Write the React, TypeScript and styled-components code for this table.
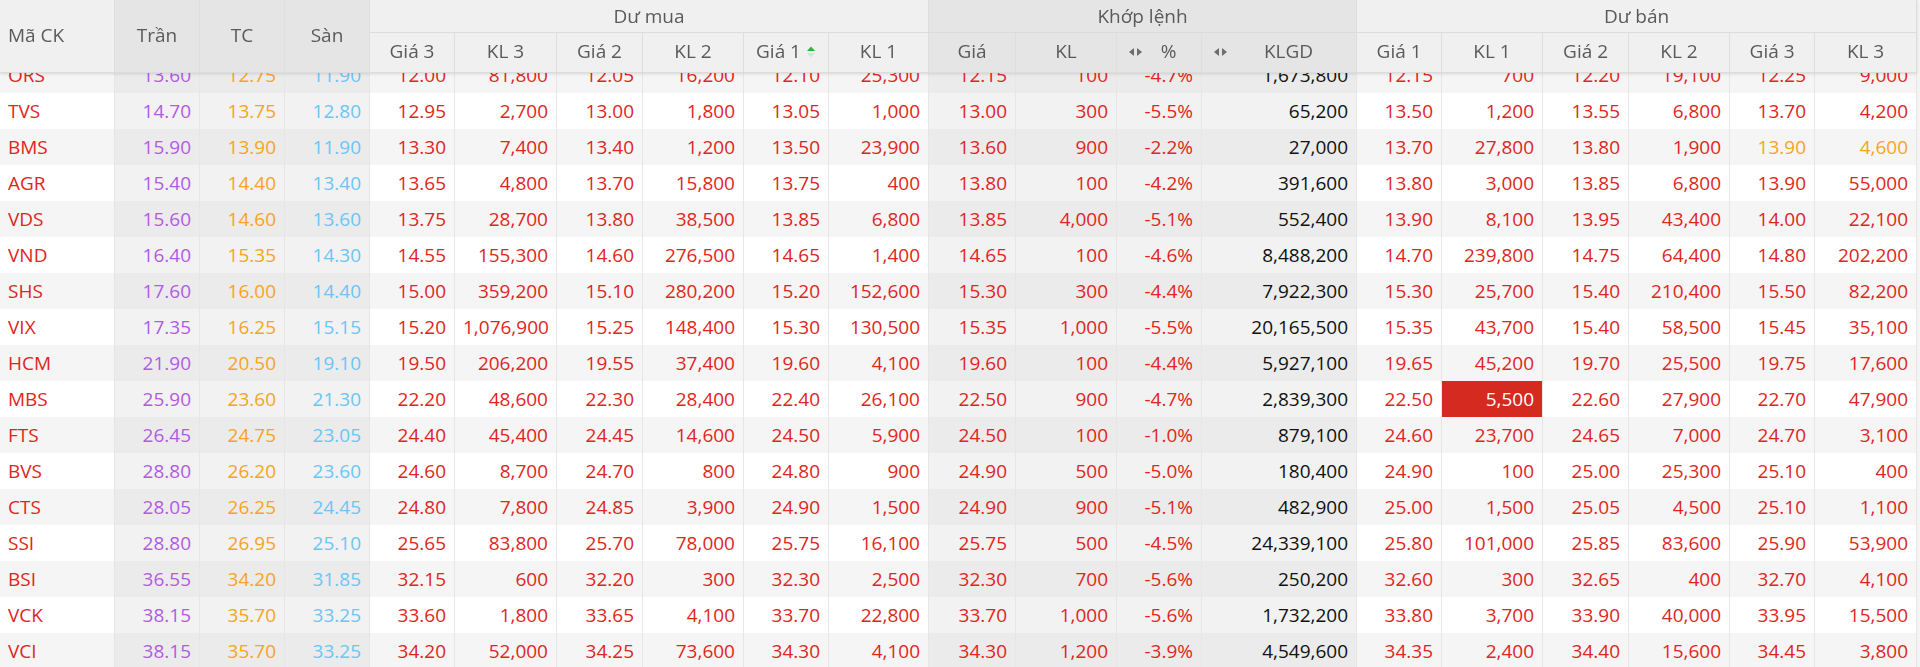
import React, { useLayoutEffect, useRef } from 'react';
import styled, { createGlobalStyle, css } from 'styled-components';

const GlobalStyle = createGlobalStyle`
  html, body { margin: 0; padding: 0; background: #ffffff; }
  body { font-family: "Open Sans", "Liberation Sans", sans-serif; }
  * { box-sizing: border-box; }
`;

const C = {
  red: '#e0251d',
  purple: '#b25ae4',
  orange: '#f7a41c',
  cyan: '#6ac6f6',
  green: '#1ea62c',
  black: '#111111',
  head: '#5a5a5a',
};

type Tone = 'plain' | 'dark';

interface ColDef {
  width: number;
  tone: Tone;
}

const COLS: ColDef[] = [
  { width: 115, tone: 'plain' },
  { width: 85, tone: 'dark' },
  { width: 85, tone: 'dark' },
  { width: 85, tone: 'dark' },
  { width: 85, tone: 'plain' },
  { width: 102, tone: 'plain' },
  { width: 86, tone: 'plain' },
  { width: 101, tone: 'plain' },
  { width: 85, tone: 'plain' },
  { width: 100, tone: 'plain' },
  { width: 87, tone: 'dark' },
  { width: 101, tone: 'dark' },
  { width: 85, tone: 'dark' },
  { width: 155, tone: 'dark' },
  { width: 85, tone: 'plain' },
  { width: 101, tone: 'plain' },
  { width: 86, tone: 'plain' },
  { width: 101, tone: 'plain' },
  { width: 85, tone: 'plain' },
  { width: 102, tone: 'plain' },
];

type Row = {
  sym: string;
  ceil: string;
  ref: string;
  floor: string;
  bid: [string, string, string, string, string, string];
  match: [string, string, string, string];
  ask: [string, string, string, string, string, string];
  flash?: number;
};

const ROWS: Row[] = [
  { sym: 'ORS', ceil: '13.60', ref: '12.75', floor: '11.90', bid: ['12.00', '81,800', '12.05', '16,200', '12.10', '25,300'], match: ['12.15', '100', '-4.7%', '1,673,800'], ask: ['12.15', '700', '12.20', '19,100', '12.25', '9,000'] },
  { sym: 'TVS', ceil: '14.70', ref: '13.75', floor: '12.80', bid: ['12.95', '2,700', '13.00', '1,800', '13.05', '1,000'], match: ['13.00', '300', '-5.5%', '65,200'], ask: ['13.50', '1,200', '13.55', '6,800', '13.70', '4,200'] },
  { sym: 'BMS', ceil: '15.90', ref: '13.90', floor: '11.90', bid: ['13.30', '7,400', '13.40', '1,200', '13.50', '23,900'], match: ['13.60', '900', '-2.2%', '27,000'], ask: ['13.70', '27,800', '13.80', '1,900', '13.90', '4,600'] },
  { sym: 'AGR', ceil: '15.40', ref: '14.40', floor: '13.40', bid: ['13.65', '4,800', '13.70', '15,800', '13.75', '400'], match: ['13.80', '100', '-4.2%', '391,600'], ask: ['13.80', '3,000', '13.85', '6,800', '13.90', '55,000'] },
  { sym: 'VDS', ceil: '15.60', ref: '14.60', floor: '13.60', bid: ['13.75', '28,700', '13.80', '38,500', '13.85', '6,800'], match: ['13.85', '4,000', '-5.1%', '552,400'], ask: ['13.90', '8,100', '13.95', '43,400', '14.00', '22,100'] },
  { sym: 'VND', ceil: '16.40', ref: '15.35', floor: '14.30', bid: ['14.55', '155,300', '14.60', '276,500', '14.65', '1,400'], match: ['14.65', '100', '-4.6%', '8,488,200'], ask: ['14.70', '239,800', '14.75', '64,400', '14.80', '202,200'] },
  { sym: 'SHS', ceil: '17.60', ref: '16.00', floor: '14.40', bid: ['15.00', '359,200', '15.10', '280,200', '15.20', '152,600'], match: ['15.30', '300', '-4.4%', '7,922,300'], ask: ['15.30', '25,700', '15.40', '210,400', '15.50', '82,200'] },
  { sym: 'VIX', ceil: '17.35', ref: '16.25', floor: '15.15', bid: ['15.20', '1,076,900', '15.25', '148,400', '15.30', '130,500'], match: ['15.35', '1,000', '-5.5%', '20,165,500'], ask: ['15.35', '43,700', '15.40', '58,500', '15.45', '35,100'] },
  { sym: 'HCM', ceil: '21.90', ref: '20.50', floor: '19.10', bid: ['19.50', '206,200', '19.55', '37,400', '19.60', '4,100'], match: ['19.60', '100', '-4.4%', '5,927,100'], ask: ['19.65', '45,200', '19.70', '25,500', '19.75', '17,600'] },
  { sym: 'MBS', ceil: '25.90', ref: '23.60', floor: '21.30', bid: ['22.20', '48,600', '22.30', '28,400', '22.40', '26,100'], match: ['22.50', '900', '-4.7%', '2,839,300'], ask: ['22.50', '5,500', '22.60', '27,900', '22.70', '47,900'], flash: 1 },
  { sym: 'FTS', ceil: '26.45', ref: '24.75', floor: '23.05', bid: ['24.40', '45,400', '24.45', '14,600', '24.50', '5,900'], match: ['24.50', '100', '-1.0%', '879,100'], ask: ['24.60', '23,700', '24.65', '7,000', '24.70', '3,100'] },
  { sym: 'BVS', ceil: '28.80', ref: '26.20', floor: '23.60', bid: ['24.60', '8,700', '24.70', '800', '24.80', '900'], match: ['24.90', '500', '-5.0%', '180,400'], ask: ['24.90', '100', '25.00', '25,300', '25.10', '400'] },
  { sym: 'CTS', ceil: '28.05', ref: '26.25', floor: '24.45', bid: ['24.80', '7,800', '24.85', '3,900', '24.90', '1,500'], match: ['24.90', '900', '-5.1%', '482,900'], ask: ['25.00', '1,500', '25.05', '4,500', '25.10', '1,100'] },
  { sym: 'SSI', ceil: '28.80', ref: '26.95', floor: '25.10', bid: ['25.65', '83,800', '25.70', '78,000', '25.75', '16,100'], match: ['25.75', '500', '-4.5%', '24,339,100'], ask: ['25.80', '101,000', '25.85', '83,600', '25.90', '53,900'] },
  { sym: 'BSI', ceil: '36.55', ref: '34.20', floor: '31.85', bid: ['32.15', '600', '32.20', '300', '32.30', '2,500'], match: ['32.30', '700', '-5.6%', '250,200'], ask: ['32.60', '300', '32.65', '400', '32.70', '4,100'] },
  { sym: 'VCK', ceil: '38.15', ref: '35.70', floor: '33.25', bid: ['33.60', '1,800', '33.65', '4,100', '33.70', '22,800'], match: ['33.70', '1,000', '-5.6%', '1,732,200'], ask: ['33.80', '3,700', '33.90', '40,000', '33.95', '15,500'] },
  { sym: 'VCI', ceil: '38.15', ref: '35.70', floor: '33.25', bid: ['34.20', '52,000', '34.25', '73,600', '34.30', '4,100'], match: ['34.30', '1,200', '-3.9%', '4,549,600'], ask: ['34.35', '2,400', '34.40', '15,600', '34.45', '3,800'] },
];

function priceColor(p: string, r: Row): string {
  const v = parseFloat(p);
  if (v === parseFloat(r.ceil)) return C.purple;
  if (v === parseFloat(r.floor)) return C.cyan;
  const ref = parseFloat(r.ref);
  if (v === ref) return C.orange;
  return v > ref ? C.green : C.red;
}

/* ---------- layout ---------- */

const Viewport = styled.div`
  width: 1920px;
  height: 667px;
  overflow: hidden;
  background: #f4f4f4;
`;

const Board = styled.table`
  width: 1917px;
  table-layout: fixed;
  border-collapse: separate;
  border-spacing: 0;
  font-size: 19px;
  line-height: 1;
`;

const Head = styled.thead`
  position: sticky;
  top: 0;
  z-index: 2;
  box-shadow: 0 1px 3px rgba(0, 0, 0, 0.12);
`;

const HeadRow = styled.tr<{ $h: number }>`
  height: ${(p) => p.$h}px;
`;

const HeadCell = styled.th<{ $tone?: Tone; $left?: boolean; $group?: boolean }>`
  padding: 0 8px 2px;
  font-weight: 400;
  color: ${C.head};
  white-space: nowrap;
  vertical-align: middle;
  text-align: ${(p) => (p.$left ? 'left' : 'center')};
  background: ${(p) => (p.$tone === 'dark' ? '#e5e5e5' : '#f0f0f0')};
  border-right: 1px solid #dedede;
  border-bottom: 1px solid #dcdcdc;
  ${(p) =>
    p.$group &&
    css`
      padding-bottom: 0;
    `}
`;

const HeadInner = styled.span`
  display: flex;
  align-items: center;
  justify-content: center;
  gap: 5px;
`;

const SwapLabel = styled.span`
  display: flex;
  align-items: center;
  padding-left: 3px;
`;

const SwapText = styled.span`
  flex: 1;
  text-align: center;
`;

const Body = styled.tbody``;

const BodyRow = styled.tr`
  height: 36px;
`;

const Cell = styled.td<{ $tone: Tone; $stripe: boolean; $color: string; $flash?: boolean; $left?: boolean }>`
  padding: 0 8px 0 8px;
  white-space: nowrap;
  vertical-align: middle;
  text-align: ${(p) => (p.$left ? 'left' : 'right')};
  color: ${(p) => (p.$flash ? '#ffffff' : p.$color)};
  border-right: 1px solid #e6e6e6;
  background: ${(p) => {
    if (p.$flash) return '#d42a1f';
    if (p.$tone === 'dark') return p.$stripe ? '#ebebeb' : '#f2f2f2';
    return p.$stripe ? '#f5f5f5' : '#ffffff';
  }};
`;

/* ---------- icons ---------- */

const SwapIcon = () => (
  <svg width="16" height="10" viewBox="0 0 16 10" aria-hidden="true">
    <path d="M6 1 L1 5 L6 9 Z" fill="#6e6e6e" />
    <path d="M9 1 L14 5 L9 9 Z" fill="#6e6e6e" />
  </svg>
);

const SortIcon = () => (
  <svg width="10" height="14" viewBox="0 0 10 14" aria-hidden="true">
    <path d="M1 6 L5 1.5 L9 6 Z" fill="#27b43a" />
    <path d="M1 8 L5 12.5 L9 8 Z" fill="#cfe2f3" />
  </svg>
);

/* ---------- app ---------- */

export default function App() {
  const ref = useRef<HTMLDivElement>(null);
  useLayoutEffect(() => {
    if (ref.current) ref.current.scrollTop = 16;
  }, []);

  const sub = ['Giá 3', 'KL 3', 'Giá 2', 'KL 2', 'Giá 1', 'KL 1'];
  const askSub = ['Giá 1', 'KL 1', 'Giá 2', 'KL 2', 'Giá 3', 'KL 3'];

  return (
    <>
      <GlobalStyle />
      <Viewport ref={ref}>
        <Board>
          <colgroup>
            {COLS.map((c, i) => (
              <col key={i} style={{ width: c.width }} />
            ))}
          </colgroup>
          <Head>
            <HeadRow $h={33}>
              <HeadCell rowSpan={2} $left>Mã CK</HeadCell>
              <HeadCell rowSpan={2} $tone="dark">Trần</HeadCell>
              <HeadCell rowSpan={2} $tone="dark">TC</HeadCell>
              <HeadCell rowSpan={2} $tone="dark">Sàn</HeadCell>
              <HeadCell colSpan={6} $group>Dư mua</HeadCell>
              <HeadCell colSpan={4} $group $tone="dark">Khớp lệnh</HeadCell>
              <HeadCell colSpan={6} $group>Dư bán</HeadCell>
            </HeadRow>
            <HeadRow $h={40}>
              {sub.map((s) => (
                <HeadCell key={'b' + s}>
                  {s === 'Giá 1' ? (
                    <HeadInner>
                      {s}
                      <SortIcon />
                    </HeadInner>
                  ) : (
                    s
                  )}
                </HeadCell>
              ))}
              <HeadCell $tone="dark">Giá</HeadCell>
              <HeadCell $tone="dark">KL</HeadCell>
              <HeadCell $tone="dark">
                <SwapLabel>
                  <SwapIcon />
                  <SwapText>%</SwapText>
                </SwapLabel>
              </HeadCell>
              <HeadCell $tone="dark">
                <SwapLabel>
                  <SwapIcon />
                  <SwapText>KLGD</SwapText>
                </SwapLabel>
              </HeadCell>
              {askSub.map((s) => (
                <HeadCell key={'a' + s}>{s}</HeadCell>
              ))}
            </HeadRow>
          </Head>
          <Body>
            {ROWS.map((r, i) => {
              const stripe = i % 2 === 0;
              const mColor = priceColor(r.match[0], r);
              const side = (vals: string[], offset: number, isAsk: boolean) =>
                vals.map((v, j) => {
                  const priceIdx = j - (j % 2);
                  const col = priceColor(vals[priceIdx], r);
                  return (
                    <Cell
                      key={offset + j}
                      $tone={COLS[offset + j].tone}
                      $stripe={stripe}
                      $color={col}
                      $flash={isAsk && r.flash === j}
                    >
                      {v}
                    </Cell>
                  );
                });
              return (
                <BodyRow key={r.sym}>
                  <Cell $tone="plain" $stripe={stripe} $color={mColor} $left>
                    {r.sym}
                  </Cell>
                  <Cell $tone="dark" $stripe={stripe} $color={C.purple}>{r.ceil}</Cell>
                  <Cell $tone="dark" $stripe={stripe} $color={C.orange}>{r.ref}</Cell>
                  <Cell $tone="dark" $stripe={stripe} $color={C.cyan}>{r.floor}</Cell>
                  {side(r.bid, 4, false)}
                  <Cell $tone="dark" $stripe={stripe} $color={mColor}>{r.match[0]}</Cell>
                  <Cell $tone="dark" $stripe={stripe} $color={mColor}>{r.match[1]}</Cell>
                  <Cell $tone="dark" $stripe={stripe} $color={mColor}>{r.match[2]}</Cell>
                  <Cell $tone="dark" $stripe={stripe} $color={C.black}>{r.match[3]}</Cell>
                  {side(r.ask, 14, true)}
                </BodyRow>
              );
            })}
          </Body>
        </Board>
      </Viewport>
    </>
  );
}
